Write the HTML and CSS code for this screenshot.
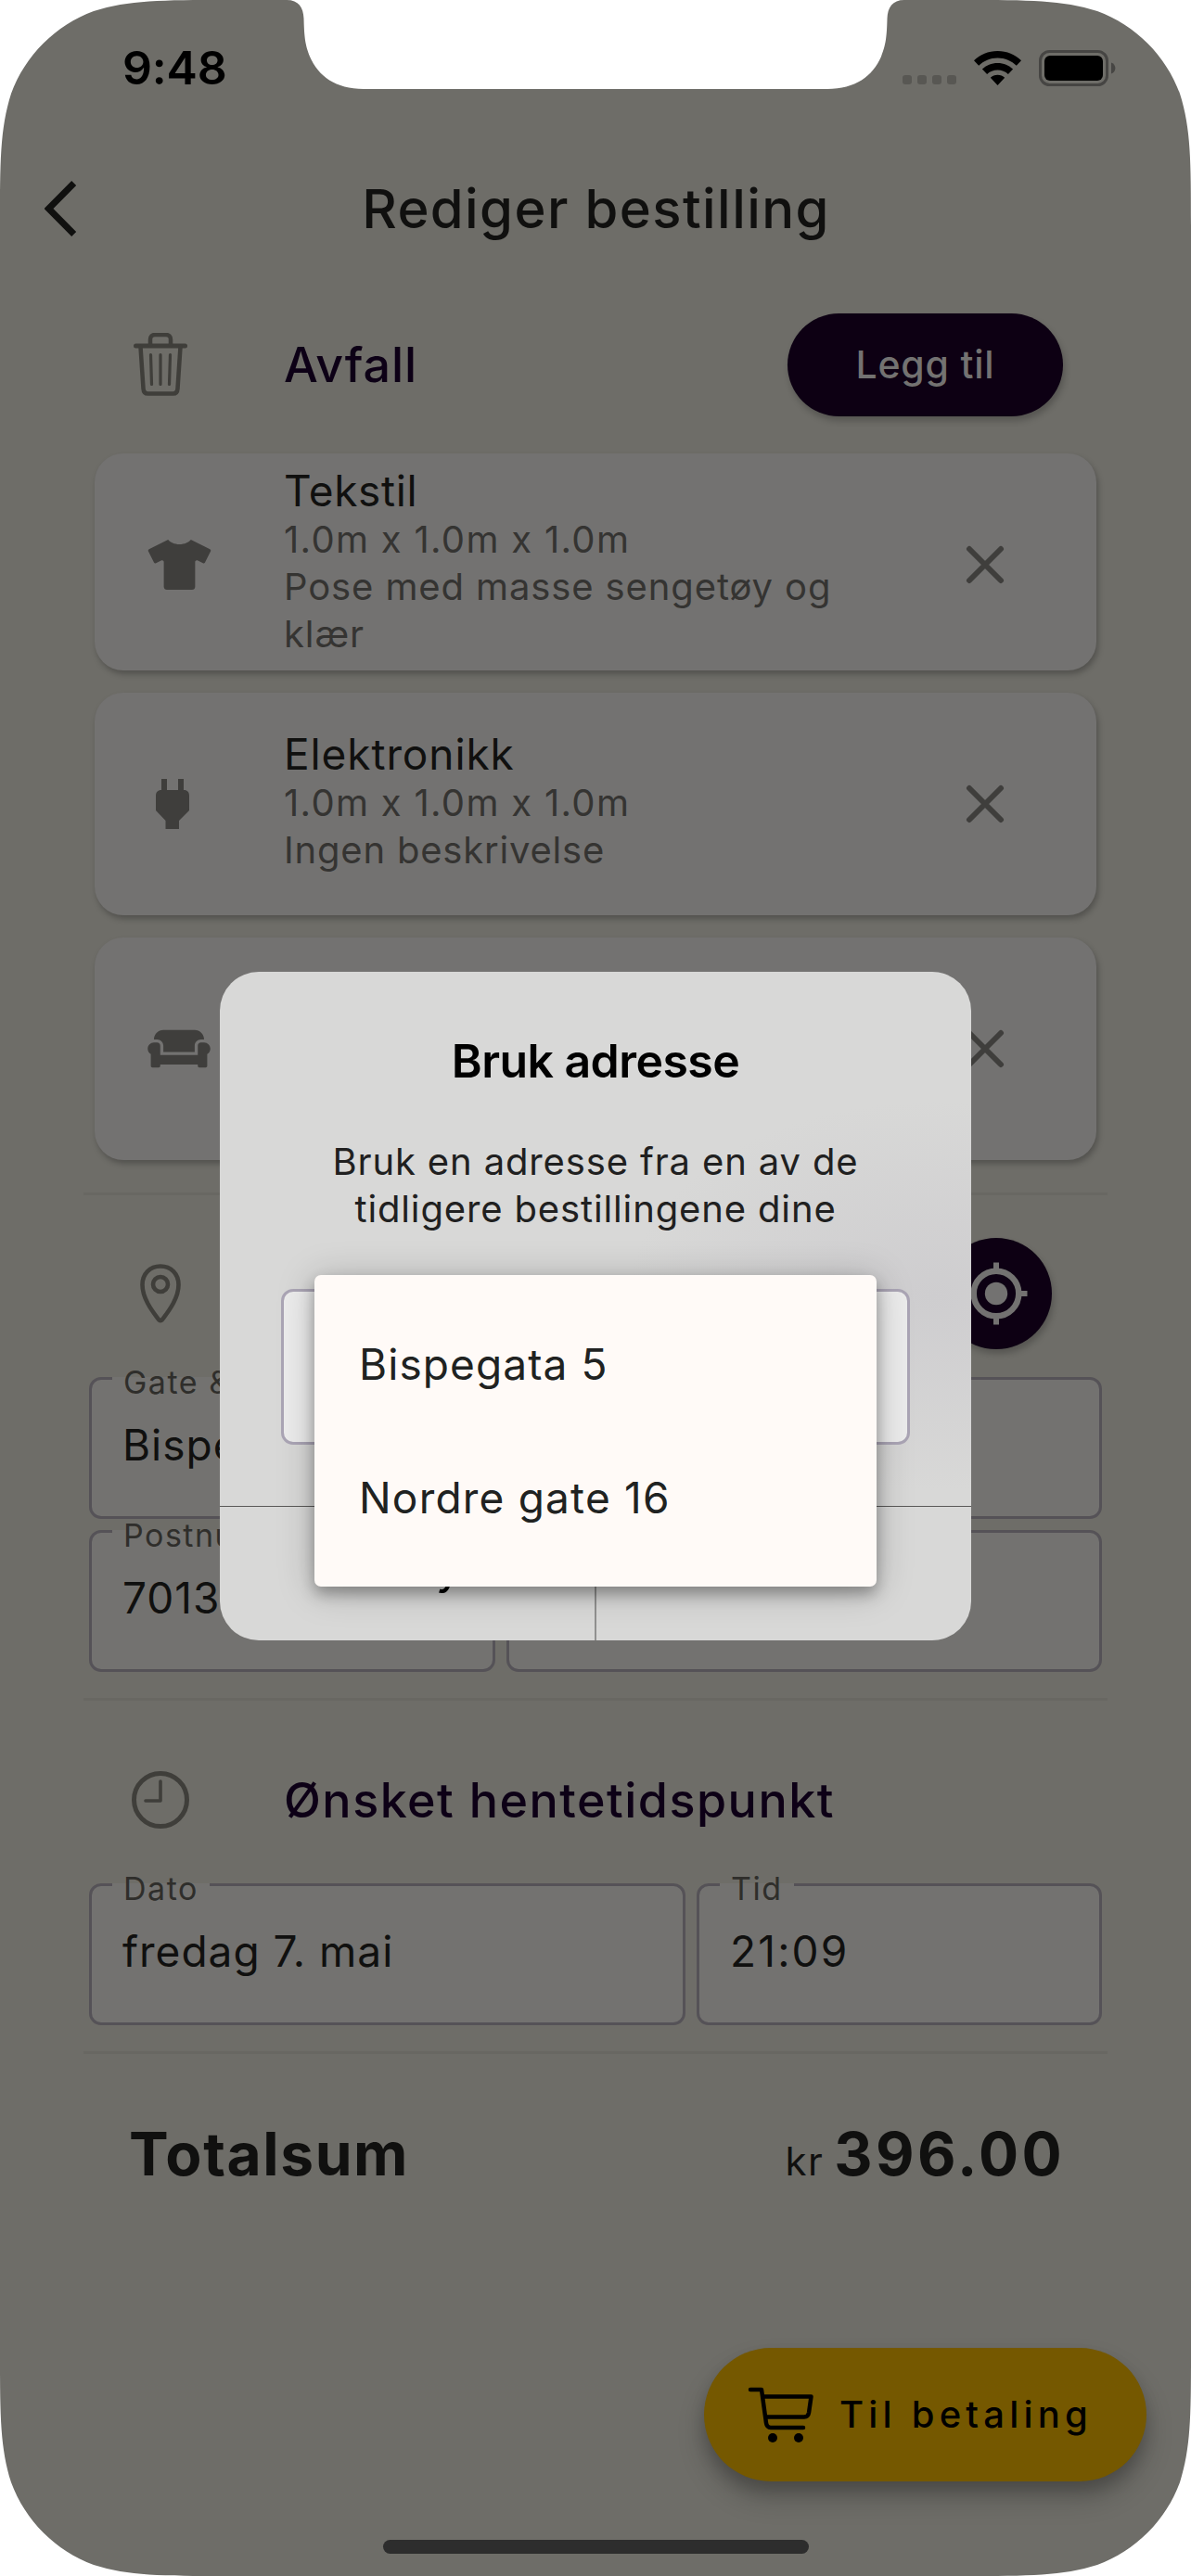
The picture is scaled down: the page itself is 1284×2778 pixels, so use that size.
FILE: index.html
```html
<!DOCTYPE html>
<html lang="nb">
<head>
<meta charset="utf-8">
<title>Rediger bestilling</title>
<link rel="stylesheet" href="styles.css">
</head>
<body>
<div class="screen">
  <header class="status">
    <span class="clock">9:48</span>
    <span class="status-icons">
      <span class="signal"><i></i><i></i><i></i><i></i></span>
      <svg class="wifi" viewBox="0 0 51 37"><path d="M25.500 0C35.500 0 44.500 3.900 51 10.300L45.800 15.700C40.500 10.500 33.400 7.400 25.500 7.400S10.500 10.500 5.200 15.700L0 10.300C6.500 3.900 15.500 0 25.500 0ZM25.500 13C32 13 37.800 15.500 42.100 19.600L36.900 24.900C33.900 22.100 29.900 20.400 25.500 20.400S17.100 22.100 14.100 24.900L8.900 19.600C13.200 15.500 19 13 25.500 13ZM25.500 25.800C28.500 25.800 31.200 26.900 33.200 28.800L25.500 37L17.800 28.800C19.800 26.900 22.500 25.800 25.500 25.800Z"/></svg>
      <svg class="battery" viewBox="0 0 83 39"><rect x="1.500" y="1.500" width="72" height="36" rx="10" fill="none" stroke="#464543" stroke-width="3"/><rect x="6" y="6" width="63" height="27" rx="6" fill="#000"/><path d="M78 13.500c3 1 4.400 3.500 4.400 6s-1.400 5-4.400 6z" fill="#464543"/></svg>
    </span>
  </header>

  <nav class="appbar">
    <svg class="back" viewBox="0 0 35 60"><path d="M31.700 2.500L4.500 30L31.700 57.500" fill="none" stroke="#10100f" stroke-width="7"/></svg>
    <h1>Rediger bestilling</h1>
  </nav>

  <section class="section-head">
    <span class="head-icon"><svg width="58" height="68" viewBox="0 0 58 68" fill="none" stroke="#3f3e3a" stroke-linecap="round" stroke-linejoin="round"><path d="M2.500 14H55.500" stroke-width="5"/><path d="M18 13V7c0-3 2-5 5-5h12c3 0 5 2 5 5v6M7.500 15l3 45c.200 3.500 2 5.500 5 5.500h27c3 0 4.800-2 5-5.500l3-45" stroke-width="4.500"/><path d="M18.500 23.500l1 32M29 23.500v32M39.500 23.500l-1 32" stroke-width="3.200"/></svg></span>
    <h2>Avfall</h2>
    <span class="add">Legg til</span>
  </section>

  <section class="cards">
    <article class="card three">
      <span class="card-icon"><svg width="69" height="54" viewBox="0 0 640 512"><path d="M631.200 96.500L436.500 0C416.400 27.800 371.900 47.200 320 47.200S223.600 27.800 203.500 0L8.800 96.500c-7.900 4-11.100 13.600-7.200 21.500l57.200 114.500c4 7.900 13.600 11.100 21.500 7.200l56.600-27.700c10.600-5.200 23 2.500 23 14.400V480c0 17.700 14.300 32 32 32h256c17.700 0 32-14.300 32-32V226.300c0-11.800 12.400-19.600 23-14.400l56.600 27.700c7.900 4 17.500.800 21.500-7.200L638.300 118c4-7.900.800-17.600-7.100-21.500z"/></svg></span>
      <div class="card-text"><h3>Tekstil</h3><p class="dims">1.0m x 1.0m x 1.0m</p><p>Pose med masse sengetøy og klær</p></div>
      <svg class="close" viewBox="0 0 42 42"><path d="M4 4L38 38M38 4L4 38"/></svg>
    </article>
    <article class="card">
      <span class="card-icon"><svg width="54" height="54" viewBox="0 0 54 54"><path d="M15 0h6v12h12V0h6v12h.500C43 12 45 14.500 45 18V34L34 45V54H19.500V45L9 34V18C9 14.500 11 12 15 12Z"/></svg></span>
      <div class="card-text"><h3>Elektronikk</h3><p class="dims">1.0m x 1.0m x 1.0m</p><p class="none">Ingen beskrivelse</p></div>
      <svg class="close" viewBox="0 0 42 42"><path d="M4 4L38 38M38 4L4 38"/></svg>
    </article>
    <article class="card">
      <span class="card-icon"><svg width="68" height="54" viewBox="0 0 640 512"><path d="M160 224v64h320v-64c0-35.300 28.700-64 64-64h32c0-53-43-96-96-96H160c-53 0-96 43-96 96h32c35.300 0 64 28.700 64 64zm416-32h-32c-17.700 0-32 14.300-32 32v96H128v-96c0-17.700-14.300-32-32-32H64c-35.300 0-64 28.700-64 64 0 23.600 13 44 32 55.100V432c0 8.800 7.200 16 16 16h64c8.800 0 16-7.200 16-16v-16h384v16c0 8.800 7.200 16 16 16h64c8.800 0 16-7.200 16-16V311.100c19-11.100 32-31.500 32-55.100 0-35.300-28.700-64-64-64z"/></svg></span>
      <div class="card-text"></div>
      <svg class="close" viewBox="0 0 42 42"><path d="M4 4L38 38M38 4L4 38"/></svg>
    </article>
  </section>

  <hr class="rule first">

  <section class="section-head place">
    <span class="head-icon"><svg width="44" height="64" viewBox="0 0 44 64" fill="none" stroke="#3f3e3a"><path d="M22 2.500C10.500 2.500 2.500 11 2.500 22.500C2.500 38 14.500 52.500 20 60Q22 62.500 24 60C29.500 52.500 41.500 38 41.500 22.500C41.500 11 33.500 2.500 22 2.500Z" stroke-width="4.600"/><circle cx="22" cy="22" r="8" stroke-width="4.600"/></svg></span>
    <span class="locate"><svg width="68" height="68" viewBox="0 0 68 68"><g fill="none" stroke="#737271"><circle cx="34" cy="34" r="24.300" stroke-width="6.500"/><path d="M34 .5V9M34 59v8.500M.5 34H9M59 34h8.500" stroke-width="6"/></g><circle cx="34" cy="34" r="12.200" fill="#737271"/></svg></span>
  </section>

  <div class="fields">
    <div class="field"><span class="label">Gate &amp; nr</span>Bispegata 5</div>
  </div>
  <div class="fields postal">
    <div class="field"><span class="label">Postnummer</span>7013</div>
    <div class="field"></div>
  </div>

  <hr class="rule second">

  <section class="section-head time">
    <span class="head-icon"><svg width="62" height="62" viewBox="0 0 62 62" fill="none" stroke="#3f3e3a"><circle cx="31" cy="31" r="28.500" stroke-width="5"/><path d="M31 11V32H15" stroke-width="3.600" stroke-linecap="round" stroke-linejoin="round"/></svg></span>
    <h2>Ønsket hentetidspunkt</h2>
  </section>

  <div class="fields when">
    <div class="field"><span class="label">Dato</span>fredag 7. mai</div>
    <div class="field hour"><span class="label">Tid</span>21:09</div>
  </div>

  <hr class="rule third">

  <section class="total">
    <strong class="sum">Totalsum</strong>
    <span class="price"><span class="cur">kr</span><strong>396.00</strong></span>
  </section>

  <footer class="bottom">
    <span class="pay">
      <svg width="72" height="60" viewBox="0 0 72 60" fill="none" stroke="#000" stroke-width="4.500" stroke-linecap="round" stroke-linejoin="round"><path d="M3 3H15L20 39c.500 3.500 2 5 5 5H60M16.500 10.500H68.500L66 28c-.500 3-2 4.500-5 4.500H19.500"/><g fill="#000" stroke="none"><circle cx="27" cy="55" r="5"/><circle cx="55" cy="55" r="5"/></g></svg>
      <span class="pay-text">Til betaling</span>
    </span>
  </footer>
  <div class="home"></div>

  <div class="dialog">
    <div class="dialog-body">
      <h2>Bruk adresse</h2>
      <p>Bruk en adresse fra en av de<br>tidligere bestillingene dine</p>
      <div class="select"></div>
    </div>
    <div class="actions"><span>Avbryt</span><span>Bruk</span></div>
  </div>
  <ul class="menu">
    <li>Bispegata 5</li>
    <li class="nordre">Nordre gate 16</li>
  </ul>
</div>
</body>
</html>
```
FILE: styles.css
```css
* { box-sizing: border-box; margin: 0; padding: 0; }
body { background: #fff; font-family: Inter, "Liberation Sans", sans-serif; color: #10100f; }

.screen {
  position: relative;
  width: 1284px;
  height: 2778px;
  background: #6e6d68;
  overflow: hidden;
  display: flex;
  flex-direction: column;
  clip-path: path("M0 245C0 174 0 139 12 101C27 60 60 27 101 12C139 0 174 0 245 0H309C322 0 327 8 327.500 20C328 40 329 48 334 61C343 82 362 96 392 96H892C922 96 941 82 950 61C955 48 956 40 956.500 20C957 8 962 0 975 0H1039C1110 0 1145 0 1183 12C1224 27 1257 60 1272 101C1284 139 1284 174 1284 245V2533C1284 2604 1284 2639 1272 2677C1257 2718 1224 2751 1183 2766C1145 2778 1110 2778 1039 2778H245C174 2778 139 2778 101 2766C60 2751 27 2718 12 2677C0 2639 0 2604 0 2533Z");
}

/* status bar */
.status { height: 146px; flex: none; display: flex; justify-content: space-between; align-items: center; padding: 0 81px 0 132px; }
.clock { font-size: 50px; font-weight: 600; letter-spacing: -.2px; color: #000; }
.status-icons { display: flex; align-items: center; }
.signal { display: flex; gap: 6px; padding-top: 26px; margin-right: 19px; }
.signal i { width: 10px; height: 10px; border-radius: 3px; background: #585753; }
.wifi { width: 51px; height: 37px; margin-right: 19px; }
.battery { width: 83px; height: 39px; }

/* app bar */
.appbar { height: 158px; flex: none; display: flex; align-items: center; padding-left: 48px; }
.back { width: 35px; height: 60px; }
.appbar h1 { flex: 1; text-align: center; padding-right: 82px; font-size: 58px; font-weight: 500; letter-spacing: 1.400px; }

/* section headings */
.section-head { height: 178px; flex: none; display: flex; align-items: center; padding: 0 138px 0 102px; }
.head-icon { width: 141px; margin-right: 63px; display: flex; justify-content: center; }
.section-head h2 { font-size: 52px; font-weight: 500; letter-spacing: 1.500px; color: #0d0016; flex: 1; }
.section-head:not(.time) h2 { letter-spacing: .9px; }
.add { width: 297px; height: 111px; border-radius: 56px; background: #0d0013; color: #737271; font-size: 41px; font-weight: 500; letter-spacing: .8px; display: flex; align-items: center; justify-content: center; padding-bottom: 1px; box-shadow: 2px 5px 7px rgba(0, 0, 0, .22); }
.place { margin-top: 17px; padding-right: 150px; justify-content: space-between; }
.locate { width: 120px; height: 120px; border-radius: 50%; background: #0d0013; display: flex; align-items: center; justify-content: center; box-shadow: 2px 5px 7px rgba(0, 0, 0, .22); }
.time { margin-top: 18px; }

/* waste cards */
.cards { display: flex; flex-direction: column; gap: 24px; padding: 7px 102px 0; }
.card { height: 240px; border-radius: 31px; background: #737271; display: flex; align-items: center; padding: 0 99px 0 57px; box-shadow: 2px 4px 6px rgba(0, 0, 0, .25); }
.card.three { height: 234px; padding-top: 6px; }
.card-icon { width: 147px; flex: none; display: flex; }
.card-icon svg { fill: #3f3e3c; }
.card-text { width: 620px; line-height: 51px; font-size: 40px; color: #353432; letter-spacing: .88px; padding-bottom: 7px; }
.card.three .card-text { padding-bottom: 7px; }
.card.three h3 { letter-spacing: .64px; }
.card-text h3 { font-size: 46px; font-weight: 400; color: #10100f; letter-spacing: .9px; line-height: 54px; }
.dims { letter-spacing: 1.300px; }
.none { letter-spacing: .8px; }
.close { width: 42px; height: 42px; margin-left: auto; fill: none; stroke: #3f3e3c; stroke-width: 6; stroke-linecap: round; }

/* separators */
.rule { border: 0; height: 3px; flex: none; background: #686762; margin: 0 90px; }
.first { margin-top: 35px; }
.second { margin-top: 28px; }
.third { margin-top: 28px; }

/* form fields */
.fields { display: flex; gap: 12px; padding: 0 96px; height: 153px; flex: none; }
.field { position: relative; flex: 1; border: 3px solid #555257; border-radius: 13px; background: #737270; padding: 42px 0 0 33px; font-size: 46px; line-height: 56px; letter-spacing: 1px; white-space: nowrap; }
.label { position: absolute; left: 22px; top: -10px; padding: 0 12px; font-size: 34px; line-height: 26px; letter-spacing: 1.500px; color: #2f2e2b; background: linear-gradient(#6e6d68 7px, #737270 7px); }
.place + .fields { margin-top: 1px; }
.postal { margin-top: 12px; }
.postal .field:first-child { flex: 0 0 438px; }
.when { margin-top: 1px; }
.when .field:first-child { flex: 0 0 643px; }
.field.hour { letter-spacing: 2.200px; }

/* total */
.total { display: flex; justify-content: space-between; align-items: baseline; padding: 69px 136px 0 139px; line-height: 78px; }
.total strong { font-size: 64px; font-weight: 700; letter-spacing: 3.400px; }
.total .sum { letter-spacing: 1.600px; }
.cur { font-size: 42px; letter-spacing: 1.500px; margin-right: 11px; }

/* checkout button */
.bottom { margin-top: auto; height: 246px; display: flex; justify-content: flex-end; align-items: flex-start; padding-right: 48px; }
.pay { width: 477px; height: 144px; border-radius: 72px; background: #755800; display: flex; align-items: center; gap: 27px; padding-left: 47px; color: #000; font-size: 40px; font-weight: 500; letter-spacing: 5.200px; box-shadow: 0 18px 30px rgba(0, 0, 0, .2), 0 10px 16px rgba(0, 0, 0, .16); }
.pay-text { padding-bottom: 2px; }
.home { position: absolute; left: 413px; top: 2739px; width: 459px; height: 15px; border-radius: 8px; background: #2d2d2d; }

/* dialog over the page */
.dialog { position: absolute; left: 237px; top: 1048px; width: 810px; height: 721px; border-radius: 42px; overflow: hidden; display: flex; flex-direction: column; background: radial-gradient(ellipse 330px 210px at 770px 350px, #cecdcf 0%, rgba(215, 215, 214, 0) 100%), #d8d8d7; color: #000; text-align: center; }
.dialog-body { flex: 1; padding: 65px 66px 0; }
.dialog-body h2 { font-size: 50px; font-weight: 600; letter-spacing: -.56px; line-height: 62px; }
.dialog-body p { margin-top: 52px; font-size: 40px; line-height: 51px; letter-spacing: .86px; color: #202020; }
.select { height: 168px; margin-top: 61px; border: 3px solid #aba5b5; border-radius: 13px; background: #ececec; }
.actions { height: 145px; border-top: 1px solid #5a5958; display: flex; }
.actions span { flex: 1; font-size: 50px; letter-spacing: -1.500px; line-height: 130px; }
.actions span + span { border-left: 2px solid #919190; }

/* open dropdown */
.menu { position: absolute; left: 339px; top: 1375px; width: 606px; height: 336px; border-radius: 7px; background: #fffaf7; list-style: none; padding: 24px 48px; color: #202221; font-size: 46px; letter-spacing: 1.090px; line-height: 144px; box-shadow: 0 8px 16px rgba(0, 0, 0, .3), 0 4px 40px rgba(0, 0, 0, .22); }
.nordre { letter-spacing: 1.200px; }
```
